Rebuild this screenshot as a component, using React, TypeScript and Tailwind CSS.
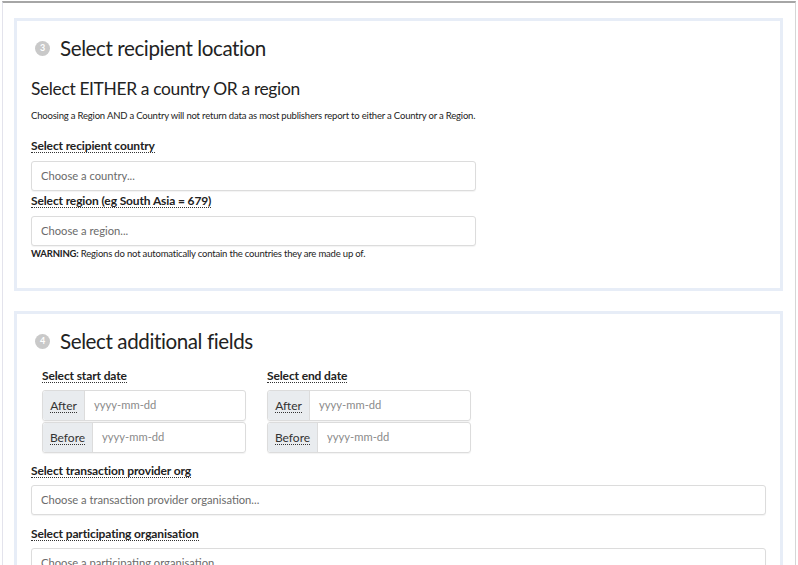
const font = { fontFamily: 'Lato, "Open Sans", sans-serif' };

function Badge({ n }: { n: number }) {
  return (
    <span className="flex h-[15px] w-[15px] items-center justify-center rounded-full bg-[#c9c9c9] text-[9px] font-bold text-white">
      {n}
    </span>
  );
}

function Label({ children, className = '' }: { children: React.ReactNode; className?: string }) {
  return (
    <div className={`flex h-[15px] items-start ${className}`}>
      <span className="border-b border-dotted border-[#333] text-[12px] font-bold leading-[13px] tracking-[-0.01em] text-[#222]">
        {children}
      </span>
    </div>
  );
}

function TextBox({ placeholder, className = '' }: { placeholder: string; className?: string }) {
  return (
    <div
      className={`flex h-[30px] items-center rounded-[3px] border border-[#dcdcdc] bg-white px-[9px] text-[11.2px] text-[#6b6b6b] shadow-[0_1px_1px_rgba(0,0,0,0.05)] ${className}`}
    >
      {placeholder}
    </div>
  );
}

function DateRow({ addon, w }: { addon: string; w: string }) {
  return (
    <div className="flex h-[31px] rounded-[3px] border border-[#dcdcdc] shadow-[0_1px_1px_rgba(0,0,0,0.05)]">
      <div className={`flex items-center justify-center rounded-l-[3px] border-r border-[#dcdcdc] bg-[#e9ecef] ${w}`}>
        <span className="border-b border-dotted border-[#333] text-[12px] leading-[13px] text-[#333]">{addon}</span>
      </div>
      <div className="flex flex-1 items-center px-[9px] text-[11.2px] text-[#8a8a8a]">yyyy-mm-dd</div>
    </div>
  );
}

function DateGroup({ label }: { label: string }) {
  return (
    <div className="w-[204px]">
      <Label className="mb-[6px]">{label}</Label>
      <div className="flex flex-col gap-px">
        <DateRow addon="After" w="w-[42px]" />
        <DateRow addon="Before" w="w-[50px]" />
      </div>
    </div>
  );
}

function Heading({ n, title }: { n: number; title: string }) {
  return (
    <div className="flex h-[28px] items-center gap-[10px] pl-[18px]">
      <Badge n={n} />
      <h2 className="text-[20.6px] leading-[28px] tracking-[-0.02em] text-[#222]">{title}</h2>
    </div>
  );
}

export default function App() {
  return (
    <div className="h-[565px] w-[798px] overflow-hidden bg-white pt-px" style={font}>
      <div className="ml-[2px] mr-[2px] h-full border-x border-t-2 border-l-[#e3e3ec] border-r-[#d6d6d6] border-t-[#a6a6a6] pl-[11px] pr-[12px] pt-[15px]">
        <section className="h-[273px] border-[3px] border-[#e7edf7] pt-[13px]">
          <Heading n={3} title="Select recipient location" />
          <div className="px-[14px]">
            <h3 className="mt-[15px] text-[17.4px] leading-[24px] tracking-[-0.02em] text-[#222]">
              Select EITHER a country OR a region
            </h3>
            <p className="mt-[8px] text-[9.5px] leading-[14px] tracking-[-0.02em] text-[#222]">
              Choosing a Region AND a Country will not return data as most publishers report to either a Country or a
              Region.
            </p>
            <Label className="mt-[16px]">Select recipient country</Label>
            <TextBox placeholder="Choose a country..." className="mt-[7px] w-[445px]" />
            <Label className="mt-[3px]">Select region (eg South Asia = 679)</Label>
            <TextBox placeholder="Choose a region..." className="mt-[7px] w-[445px]" />
            <p className="mt-px text-[9.5px] leading-[14px] tracking-[-0.02em] text-[#222]">
              <b>WARNING:</b> Regions do not automatically contain the countries they are made up of.
            </p>
          </div>
        </section>
        <section className="mt-[20px] h-[300px] border-[3px] border-[#e7edf7] pt-[13px]">
          <Heading n={4} title="Select additional fields" />
          <div className="px-[14px]">
            <div className="mt-[14px] flex gap-[21px] pl-[11px]">
              <DateGroup label="Select start date" />
              <DateGroup label="Select end date" />
            </div>
            <Label className="mt-[11px]">Select transaction provider org</Label>
            <TextBox placeholder="Choose a transaction provider organisation..." className="mt-[6px]" />
            <Label className="mt-[12px]">Select participating organisation</Label>
            <TextBox placeholder="Choose a participating organisation..." className="mt-[6px]" />
          </div>
        </section>
      </div>
    </div>
  );
}
